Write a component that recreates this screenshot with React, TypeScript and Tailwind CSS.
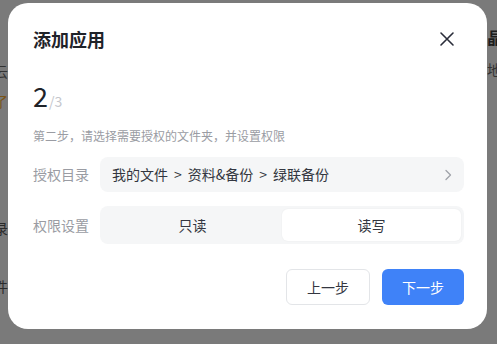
import React from "react";

const App: React.FC = () => {
  return (
    <div className="relative w-[497px] h-[344px] overflow-hidden bg-[#7a7a7a] font-['Noto_Sans_CJK_SC',sans-serif]">
      {/* dimmed page behind the dialog */}
      <div className="flex justify-between h-full">
        <div className="flex flex-col -ml-[6px] text-[14px] text-[#2a2a2a]">
          <span className="mt-[61px] text-[#333]">云</span>
          <span className="mt-[9px] text-[#7a5418]">了</span>
          <span className="mt-[106px]">录</span>
          <span className="mt-[37px]">件</span>
        </div>
        <div className="flex flex-col -mr-[6px] text-[#1e1e1e]">
          <span className="mt-[25px] text-[16px] font-bold">晶</span>
          <span className="mt-[10px] text-[14px] text-[#333]">地</span>
        </div>
      </div>

      <div className="absolute left-[8px] top-[3px] w-[479px] h-[326px] bg-white rounded-[20px] pl-[25px] pr-[23px] pt-[23px]">
        <div className="flex items-center justify-between">
          <h2 className="text-[18px] leading-[26px] font-bold text-[#1f2329]">添加应用</h2>
          <button className="mr-[9px] text-[#2a2d3a]">
            <svg width="16" height="16" viewBox="0 0 16 16" fill="none" stroke="currentColor" strokeWidth="1.6" strokeLinecap="round">
              <path d="M2 2 L14 14 M14 2 L2 14" />
            </svg>
          </button>
        </div>

        <div className="mt-[29px] flex items-baseline">
          <span className="text-[27px] leading-[30px] text-[#1f2329]">2</span>
          <span className="ml-[1px] text-[14px] text-[#c4c6cc]">/3</span>
        </div>

        <p className="mt-[15px] text-[12px] leading-[18px] text-[#9a9ca3]">第二步，请选择需要授权的文件夹，并设置权限</p>

        <div className="mt-[12px] flex items-center gap-[11px]">
          <span className="w-[56px] text-[14px] text-[#9a9ca3]">授权目录</span>
          <div className="flex-1 h-[35px] rounded-[8px] bg-[#f5f6f7] flex items-center justify-between pl-[12px] pr-[12px]">
            <span className="flex items-center text-[14px] text-[#333640]">
              我的文件<span className="px-[6px]">&gt;</span>资料&amp;备份<span className="px-[6px]">&gt;</span>绿联备份
            </span>
            <svg width="8" height="12" viewBox="0 0 8 12" fill="none" stroke="#a0a3aa" strokeWidth="1.3" strokeLinecap="round" strokeLinejoin="round">
              <path d="M2 1.5 L6.5 6 L2 10.5" />
            </svg>
          </div>
        </div>

        <div className="mt-[14px] flex items-center gap-[11px]">
          <span className="w-[56px] text-[14px] text-[#9a9ca3]">权限设置</span>
          <div className="flex-1 h-[38px] rounded-[8px] bg-[#f5f6f7] p-[3px] flex">
            <div className="flex-1 flex items-center justify-center text-[14px] text-[#333640]">只读</div>
            <div className="flex-1 flex items-center justify-center text-[14px] text-[#333640] bg-white rounded-[6px] shadow-[0_0_2px_rgba(0,0,0,0.06)]">读写</div>
          </div>
        </div>

        <div className="mt-[25px] flex justify-end gap-[12px]">
          <button className="w-[84px] h-[36px] rounded-[6px] border border-[#e3e5e8] bg-white text-[14px] text-[#333640]">上一步</button>
          <button className="w-[82px] h-[36px] rounded-[6px] bg-[#3f82f8] text-[14px] text-white">下一步</button>
        </div>
      </div>
    </div>
  );
};

export default App;
